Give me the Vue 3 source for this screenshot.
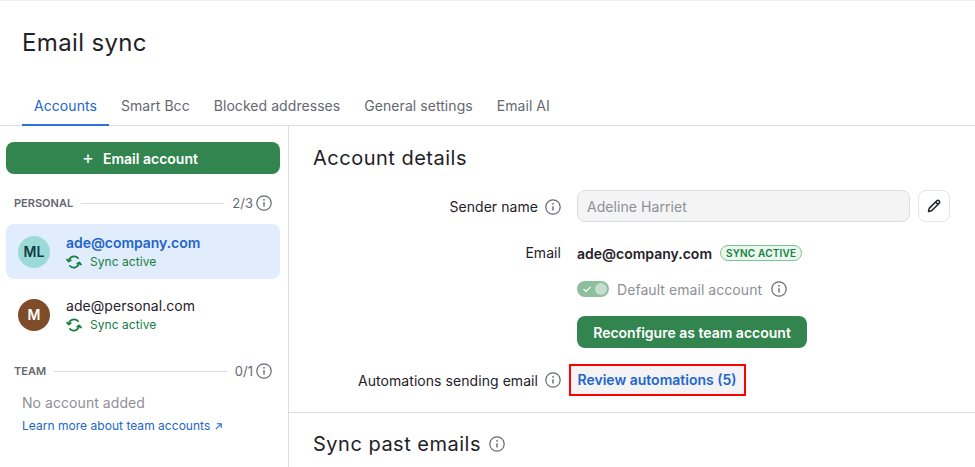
<template>
  <div class="page">
    <header class="head">
      <h1>Email sync</h1>
    </header>
    <nav class="tabs">
      <a v-for="(tab, i) in tabs" :key="tab" class="tab" :class="{ active: i === 0 }">{{ tab }}</a>
    </nav>
    <div class="body">
      <aside class="side">
        <button class="btn add"><span class="plus">+</span>Email account</button>

        <div class="section-head personal">
          <span class="section-name">PERSONAL</span>
          <span class="rule"></span>
          <span class="count">2/3</span>
          <svg class="info" viewBox="0 0 16 16"><use href="#info-icon" /></svg>
        </div>

        <div v-for="acc in accounts" :key="acc.email" class="account" :class="{ selected: acc.selected }">
          <span class="avatar" :class="acc.tone">{{ acc.initials }}</span>
          <div class="account-text">
            <div class="account-mail">{{ acc.email }}</div>
            <div class="account-sync">
              <svg class="sync-icon" viewBox="0 0 16 16" fill="none" stroke="currentColor" stroke-width="1.7" stroke-linecap="round" stroke-linejoin="round">
                <path d="M2.8 7A5.4 5.4 0 0 1 12.2 4.2" />
                <path d="M13.2 9A5.4 5.4 0 0 1 3.8 11.8" />
                <path d="M1 5.4L2.6 7.6L4.8 6.2" />
                <path d="M15 10.6L13.4 8.4L11.2 9.8" />
              </svg>
              Sync active
            </div>
          </div>
        </div>

        <div class="section-head team">
          <span class="section-name">TEAM</span>
          <span class="rule"></span>
          <span class="count">0/1</span>
          <svg class="info" viewBox="0 0 16 16"><use href="#info-icon" /></svg>
        </div>
        <div class="empty">No account added</div>
        <a class="learn">Learn more about team accounts
          <svg class="arrow" viewBox="0 0 10 10" fill="none" stroke="currentColor" stroke-width="1.2"><path d="M2 8L8 2M3.2 2H8V6.8" /></svg>
        </a>
      </aside>

      <main class="main">
        <section class="details">
          <h2>Account details</h2>
          <div class="form">
            <div class="label sender-label">Sender name
              <svg class="info" viewBox="0 0 16 16"><use href="#info-icon" /></svg>
            </div>
            <div class="sender">
              <div class="input">Adeline Harriet</div>
              <button class="edit">
                <svg viewBox="0 0 16 16" width="16" height="16" fill="none" stroke="#1f2229" stroke-width="1.5" stroke-linejoin="round">
                  <path d="M2.5 13.5L3.2 10.4L10.8 2.8C11.4 2.2 12.3 2.2 12.9 2.8L13.2 3.1C13.8 3.7 13.8 4.6 13.2 5.2L5.6 12.8Z" />
                  <path d="M9.6 4L12 6.4" />
                </svg>
              </button>
            </div>

            <div class="label email-label">Email</div>
            <div class="email-value">
              <strong>ade@company.com</strong>
              <span class="badge">SYNC ACTIVE</span>
            </div>

            <div></div>
            <div class="default-row">
              <span class="toggle">
                <svg viewBox="0 0 10 10" width="10" height="10" fill="none" stroke="#fff" stroke-width="1.2"><path d="M1.5 5.2L4 7.5L8.5 2.8" /></svg>
                <span class="knob"></span>
              </span>
              <span class="default-text">Default email account</span>
              <svg class="info" viewBox="0 0 16 16"><use href="#info-icon" /></svg>
            </div>

            <div></div>
            <div><button class="btn reconfigure">Reconfigure as team account</button></div>

            <div class="label auto-label">Automations sending email
              <svg class="info" viewBox="0 0 16 16"><use href="#info-icon" /></svg>
            </div>
            <div class="auto-cell"><a class="review">Review automations (5)</a></div>
          </div>
        </section>
        <section class="past">
          <h2>Sync past emails</h2>
          <svg class="info" viewBox="0 0 16 16"><use href="#info-icon" /></svg>
        </section>
      </main>
    </div>

    <svg width="0" height="0" class="defs">
      <symbol id="info-icon" viewBox="0 0 16 16">
        <circle cx="8" cy="8" r="7.2" fill="none" stroke="currentColor" stroke-width="1.2" />
        <circle cx="8" cy="4.8" r="0.9" fill="currentColor" />
        <path d="M8 7.2V11.6" stroke="currentColor" stroke-width="1.4" fill="none" />
      </symbol>
    </svg>
  </div>
</template>

<script setup>
const tabs = ['Accounts', 'Smart Bcc', 'Blocked addresses', 'General settings', 'Email AI'];

const accounts = [
  { email: 'ade@company.com', initials: 'ML', tone: 'teal', selected: true },
  { email: 'ade@personal.com', initials: 'M', tone: 'brown', selected: false },
];
</script>

<style>
html, body {
  margin: 0;
  background: #fff;
  overflow: hidden;
}
</style>

<style scoped>
.page {
  width: 975px;
  height: 467px;
  overflow: hidden;
  border-top: 1px solid #f0f0f1;
  box-sizing: border-box;
  font-family: Inter, "Liberation Sans", sans-serif;
  font-size: 14px;
  letter-spacing: 0.06px;
  color: #1f2229;
}
.defs {
  position: absolute;
}
.head {
  height: 86px;
  padding: 27px 22px 0;
  box-sizing: border-box;
}
h1 {
  margin: 0;
  font-size: 24px;
  line-height: 30px;
  font-weight: 400;
  letter-spacing: 0.35px;
}
.tabs {
  display: flex;
  height: 39px;
  padding-left: 22px;
  box-sizing: border-box;
  border-bottom: 1px solid #dcdde0;
}
.tab {
  padding: 0 12px;
  height: 39px;
  line-height: 37px;
  box-sizing: border-box;
  color: #65686f;
}
.tab.active {
  color: #2266c9;
  border-bottom: 2px solid #2f6fd6;
}
.body {
  display: flex;
}
.side {
  width: 289px;
  height: 342px;
  box-sizing: border-box;
  padding: 16px 8px 0 6px;
  border-right: 1px solid #dcdde0;
  flex: none;
}
.btn {
  border: 0;
  border-radius: 8px;
  background: #33854f;
  color: #fff;
  font: 600 14px Inter, "Liberation Sans", sans-serif;
  height: 32px;
  display: flex;
  align-items: center;
  justify-content: center;
}
.add {
  width: 100%;
  padding-right: 12px;
}
.plus {
  font-size: 18px;
  font-weight: 400;
  margin-right: 9px;
  line-height: 18px;
}
.section-head {
  display: flex;
  align-items: center;
  padding: 0 8px;
  height: 20px;
  color: #65686f;
}
.personal {
  margin-top: 19px;
  margin-bottom: 11px;
}
.team {
  margin-top: 19px;
}
.section-name {
  font-size: 11px;
  font-weight: 600;
  letter-spacing: 0;
}
.rule {
  flex: 1;
  height: 1px;
  background: #dcdde0;
  margin: 0 8px;
}
.count {
  font-size: 13px;
  margin-right: 3px;
  letter-spacing: 0;
}
.info {
  width: 16px;
  height: 16px;
  color: #65686f;
  flex: none;
}
.account {
  display: flex;
  align-items: center;
  height: 55px;
  padding-left: 12px;
  border-radius: 8px;
  margin-bottom: 8px;
}
.account.selected {
  background: #e1ecfc;
}
.avatar {
  width: 32px;
  height: 32px;
  border-radius: 50%;
  display: flex;
  align-items: center;
  justify-content: center;
  font-size: 14px;
  font-weight: 600;
  margin-right: 16px;
  flex: none;
}
.teal {
  background: #9cdad7;
  color: #0f3b46;
}
.brown {
  background: #7f4c2a;
  color: #fff;
}
.account-mail {
  line-height: 20px;
  margin-top: -2px;
  margin-bottom: 1px;
}
.selected .account-mail {
  color: #2266c9;
  font-weight: 600;
  letter-spacing: -0.05px;
}
.account-sync {
  display: flex;
  align-items: center;
  gap: 8px;
  color: #15803f;
  font-size: 12px;
  line-height: 16px;
  margin-bottom: -1px;
}
.sync-icon {
  width: 16px;
  height: 16px;
}
.empty {
  margin: 12px 0 0 16px;
  line-height: 20px;
  color: #8e9096;
}
.learn {
  display: flex;
  align-items: center;
  gap: 4px;
  margin: 3px 0 0 16px;
  font-size: 12px;
  line-height: 20px;
  letter-spacing: 0.03px;
  color: #2266c9;
}
.arrow {
  width: 9px;
  height: 9px;
}
.main {
  flex: 1;
  min-width: 0;
}
.details {
  padding: 18px 25px 0 24px;
  height: 287px;
  box-sizing: border-box;
  border-bottom: 1px solid #dcdde0;
}
h2 {
  margin: 0;
  font-size: 20px;
  line-height: 28px;
  font-weight: 400;
  letter-spacing: 0.5px;
}
.form {
  display: grid;
  grid-template-columns: 264px 1fr;
  margin-top: 18px;
}
.label {
  display: flex;
  align-items: center;
  justify-content: flex-end;
  padding-right: 16px;
  gap: 7px;
}
.sender {
  display: flex;
  gap: 8px;
  height: 32px;
}
.input {
  flex: 1;
  box-sizing: border-box;
  height: 32px;
  line-height: 31px;
  padding-left: 9px;
  border: 1px solid #dcdde0;
  border-radius: 8px;
  background: #f4f4f5;
  color: #8e9096;
}
.edit {
  width: 32px;
  height: 32px;
  padding: 0;
  background: #fff;
  border: 1px solid #e3e4e6;
  border-radius: 8px;
  display: flex;
  align-items: center;
  justify-content: center;
}
.email-value {
  display: flex;
  align-items: center;
  gap: 8px;
  height: 20px;
  margin-top: 21px;
}
.email-label {
  margin-top: 20px;
  height: 20px;
}
.sender-label {
  padding-top: 1px;
}
.email-value strong {
  font-weight: 600;
  letter-spacing: 0;
}
.badge {
  border: 1px solid #7cc493;
  background: #e9f7ee;
  color: #15803f;
  font-size: 10px;
  font-weight: 600;
  letter-spacing: 0.2px;
  line-height: 14px;
  padding: 0 5px;
  border-radius: 8px;
}
.default-row {
  display: flex;
  align-items: center;
  height: 20px;
  margin-top: 16px;
}
.toggle {
  width: 32px;
  height: 16px;
  border-radius: 8px;
  background: #8dbf9c;
  display: flex;
  align-items: center;
  justify-content: space-between;
  padding: 0 2px 0 5px;
  box-sizing: border-box;
}
.knob {
  width: 12px;
  height: 12px;
  border-radius: 50%;
  background: #c6dece;
}
.default-text {
  color: #8e9096;
  margin: 0 9px 0 8px;
}
.reconfigure {
  width: 230px;
  margin-top: 17px;
}
.auto-label {
  margin-top: 16px;
  height: 32px;
}
.auto-cell {
  margin-top: 16px;
}
.review {
  display: inline-block;
  box-sizing: border-box;
  margin-left: -8px;
  width: 177px;
  height: 32px;
  line-height: 28px;
  padding-left: 6.5px;
  border: 2px solid #f00;
  background: #f3f3f5;
  color: #2266c9;
  font-weight: 600;
  letter-spacing: 0;
}
.past {
  display: flex;
  align-items: center;
  gap: 8px;
  padding: 17px 24px 0;
}
</style>
